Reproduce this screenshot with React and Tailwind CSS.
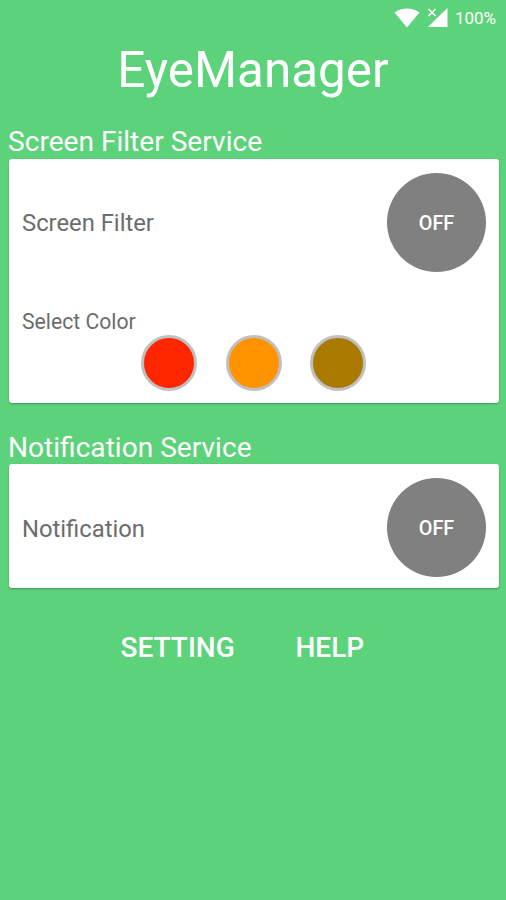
const colors = [
  { name: 'Red', className: 'bg-[#ff2600]' },
  { name: 'Orange', className: 'bg-[#ff9300]' },
  { name: 'Brown', className: 'bg-[#aa7900]' },
]

function StatusBar() {
  return (
    <div className="flex h-9 items-center justify-end pr-[10px] text-white">
      <svg width="26" height="20" viewBox="0 0 26 20" fill="currentColor">
        <path d="M0.500 4.500C8-1 18-1 25.500 4.500L13 19.500Z" />
      </svg>
      <svg className="ml-[7px]" width="21" height="20" viewBox="0 0 21 20">
        <path d="M20.500 0V19H1L10 10Z" fill="currentColor" />
        <path d="M1.500 1L8.500 8M8.500 1L1.500 8" stroke="currentColor" strokeWidth="1.7" />
      </svg>
      <span className="mt-px ml-[7px] text-[17px]">100%</span>
    </div>
  )
}

function ToggleButton() {
  return (
    <button className="flex size-[99px] items-center justify-center rounded-full bg-[#808080] pt-[2px] text-[19.800px] font-medium text-white">
      OFF
    </button>
  )
}

export default function App() {
  return (
    <div className="h-[900px] w-[506px] overflow-hidden bg-[#5cd37a] font-[Roboto,sans-serif]">
      <StatusBar />
      <h1 className="h-[90px] pt-[4px] text-center text-[49.400px] leading-[60px] text-white">EyeManager</h1>

      <section className="pr-[7px] pl-[8.500px]">
        <h2 className="-ml-[0.500px] h-[33px] text-[28.100px] leading-[32px] text-white">Screen Filter Service</h2>
        <div className="h-[244px] rounded-[3px] bg-white pt-[14px] pr-[13px] pl-[13.500px] text-[#6c6c6c] shadow-[0_1px_2px_rgba(0,0,0,0.3)]">
          <div className="flex items-start justify-between">
            <span className="text-[23.800px] leading-[101px]">Screen Filter</span>
            <ToggleButton />
          </div>
          <p className="mt-[34px] text-[21.200px] leading-[28px]">Select Color</p>
          <div className="-mt-px flex justify-center gap-[28.500px] pr-[1px]">
            {colors.map((color) => (
              <button
                key={color.name}
                aria-label={color.name}
                className={`size-[56px] rounded-full border-[3px] border-[#c0c0c0] ${color.className}`}
              />
            ))}
          </div>
        </div>
      </section>

      <section className="mt-[28px] pr-[7px] pl-[8.500px]">
        <h2 className="-ml-[0.500px] h-[33px] pt-px text-[28.100px] leading-[32px] text-white">Notification Service</h2>
        <div className="flex h-[124px] items-start justify-between rounded-[3px] bg-white pt-[14px] pr-[13px] pl-[13.500px] text-[#6c6c6c] shadow-[0_1px_2px_rgba(0,0,0,0.3)]">
          <span className="text-[23.800px] leading-[103px]">Notification</span>
          <ToggleButton />
        </div>
      </section>

      <div className="mt-[43px] flex pl-[120.500px] text-[28px] leading-[34px] font-medium text-white">
        <button className="w-[175px] text-left">SETTING</button>
        <button>HELP</button>
      </div>
    </div>
  )
}
